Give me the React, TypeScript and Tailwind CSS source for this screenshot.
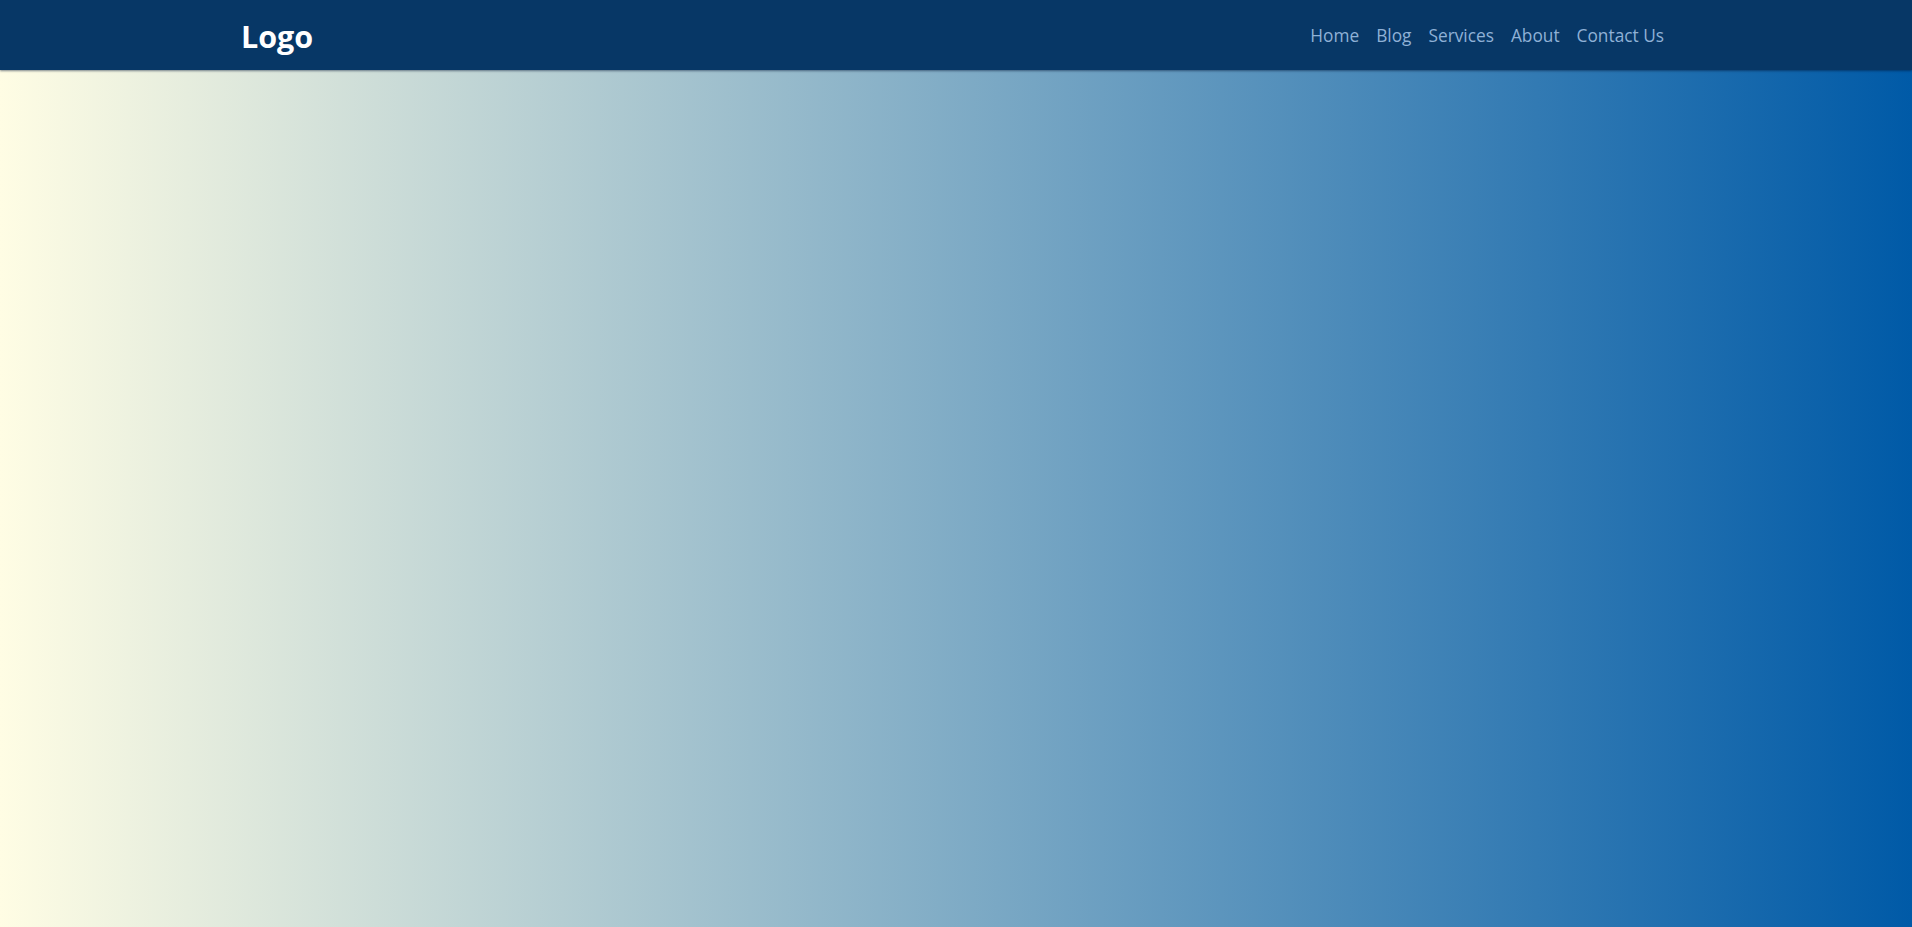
import React from "react";

export default function App() {
  const links = ["Home", "Blog", "Services", "About", "Contact Us"];
  return (
    <div
      className="min-h-screen w-full bg-[linear-gradient(to_right,#fffde4,#005aa7)]"
      style={{ fontFamily: '"Open Sans", "Noto Sans", sans-serif' }}
    >
      <header className="h-[70px] w-full bg-[#073766] shadow-[0_1px_2px_rgba(0,20,50,0.5)]">
        <div className="ml-[241px] flex h-full w-[1423px] items-center justify-between">
          <div className="pt-[2px] text-[30.5px] font-bold leading-none text-white">Logo</div>
          <nav className="flex items-center gap-[17px] pt-[1px]">
            {links.map((l) => (
              <a key={l} href="#" className="text-[17.3px] leading-none text-[#8fb1d6]">
                {l}
              </a>
            ))}
          </nav>
        </div>
      </header>
    </div>
  );
}
